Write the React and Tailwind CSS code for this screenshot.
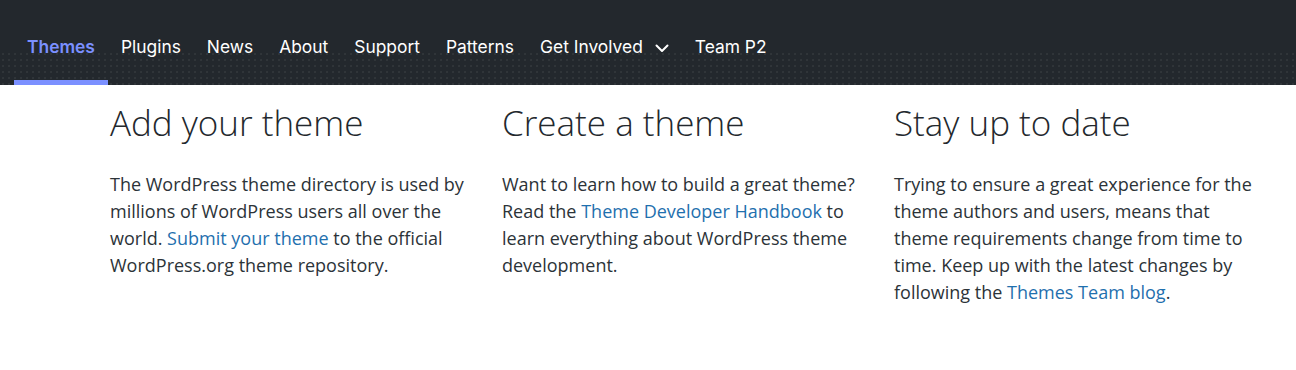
import React from "react";

const navItems = ["Plugins", "News", "About", "Support", "Patterns"];

function Chevron() {
  return (
    <svg width="14" height="9" viewBox="0 0 14 9" className="ml-[12px] mt-[2px]" fill="none">
      <path d="M1.5 1.5 L7 7 L12.5 1.5" stroke="#ffffff" strokeWidth="2" strokeLinecap="round" strokeLinejoin="round" />
    </svg>
  );
}

export default function App() {
  const link = "text-[#1f70ae]";
  return (
    <div className="w-[1296px] h-[370px] bg-white">
      <nav className="relative h-[85px] bg-[#23282d] pl-[14px] flex items-stretch font-['Inter',sans-serif] text-[17.4px] text-white before:content-[''] before:absolute before:left-0 before:right-0 before:bottom-0 before:h-[34px] before:bg-[radial-gradient(circle,rgba(255,255,255,0.06)_0.7px,transparent_1.2px)] before:bg-[length:6px_6px]">
        <a className="relative flex items-center px-[13px] pt-[14px] font-semibold text-[#7b90ff] border-b-[5px] border-[#7b90ff]">
          Themes
        </a>
        {navItems.map((t) => (
          <a key={t} className="relative flex items-center px-[13px] pt-[9px]">
            {t}
          </a>
        ))}
        <a className="relative flex items-center px-[13px] pt-[9px]">
          Get Involved
          <Chevron />
        </a>
        <a className="relative flex items-center px-[13px] pt-[9px]">Team P2</a>
      </nav>
      <div className="pl-[110px] pt-[16px] grid grid-cols-[360px_360px_360px] gap-x-[32px] font-['Open_Sans',sans-serif]">
        <section>
          <h2 className="text-[35px] leading-[43px] font-light text-[#23282d]">Add your theme</h2>
          <p className="mt-[27px] text-[18px] leading-[27px] text-[#2c3338]">
            The WordPress theme directory is used by millions of WordPress users all over the world.{" "}
            <a className={link}>Submit your theme</a> to the official WordPress.org theme repository.
          </p>
        </section>
        <section>
          <h2 className="text-[35px] leading-[43px] font-light text-[#23282d]">Create a theme</h2>
          <p className="mt-[27px] text-[18px] leading-[27px] text-[#2c3338]">
            Want to learn how to build a great theme? Read the{" "}
            <a className={link}>Theme Developer Handbook</a> to learn everything about WordPress theme development.
          </p>
        </section>
        <section>
          <h2 className="text-[35px] leading-[43px] font-light text-[#23282d]">Stay up to date</h2>
          <p className="mt-[27px] text-[18px] leading-[27px] text-[#2c3338]">
            Trying to ensure a great experience for the theme authors and users, means that theme requirements change from time to time. Keep up with the latest changes by following the{" "}
            <a className={link}>Themes Team blog</a>.
          </p>
        </section>
      </div>
    </div>
  );
}
